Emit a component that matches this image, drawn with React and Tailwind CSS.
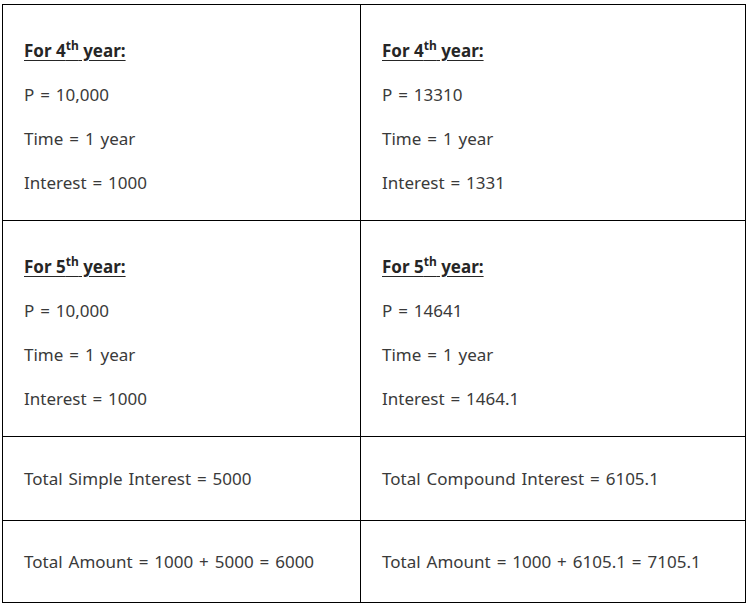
import React from "react";

const Heading = ({ n }) => (
  <div className="font-bold underline underline-offset-[3px] text-[#262626] [word-spacing:0px]">
    For {n}
    <sup className="text-[12px] font-bold relative top-[-0.6em] align-baseline">th</sup> year:
  </div>
);

const Block = ({ n, p, interest }) => (
  <div className="flex flex-col gap-[20px] pt-[34px]">
    <Heading n={n} />
    <div>P = {p}</div>
    <div>Time = 1 year</div>
    <div>Interest = {interest}</div>
  </div>
);

export default function App() {
  return (
    <div
      className="pl-[2px] pt-[4px] bg-white text-[#3a3a3a] text-[17px] leading-[24px] [word-spacing:1.5px]"
      style={{ fontFamily: '"Segoe UI", "Noto Sans", "Open Sans", sans-serif' }}
    >
      <table className="border-collapse w-[744px] table-fixed">
        <colgroup>
          <col className="w-[358px]" />
          <col />
        </colgroup>
        <tbody>
          <tr className="h-[216px]">
            <td className="border border-black align-top pl-[21px]">
              <Block n="4" p="10,000" interest="1000" />
            </td>
            <td className="border border-black align-top pl-[21px]">
              <Block n="4" p="13310" interest="1331" />
            </td>
          </tr>
          <tr className="h-[216px]">
            <td className="border border-black align-top pl-[21px]">
              <Block n="5" p="10,000" interest="1000" />
            </td>
            <td className="border border-black align-top pl-[21px]">
              <Block n="5" p="14641" interest="1464.1" />
            </td>
          </tr>
          <tr className="h-[84px]">
            <td className="border border-black pl-[21px]">Total Simple Interest = 5000</td>
            <td className="border border-black pl-[21px]">Total Compound Interest = 6105.1</td>
          </tr>
          <tr className="h-[82px]">
            <td className="border border-black pl-[21px]">Total Amount = 1000 + 5000 = 6000</td>
            <td className="border border-black pl-[21px]">Total Amount = 1000 + 6105.1 = 7105.1</td>
          </tr>
        </tbody>
      </table>
    </div>
  );
}
